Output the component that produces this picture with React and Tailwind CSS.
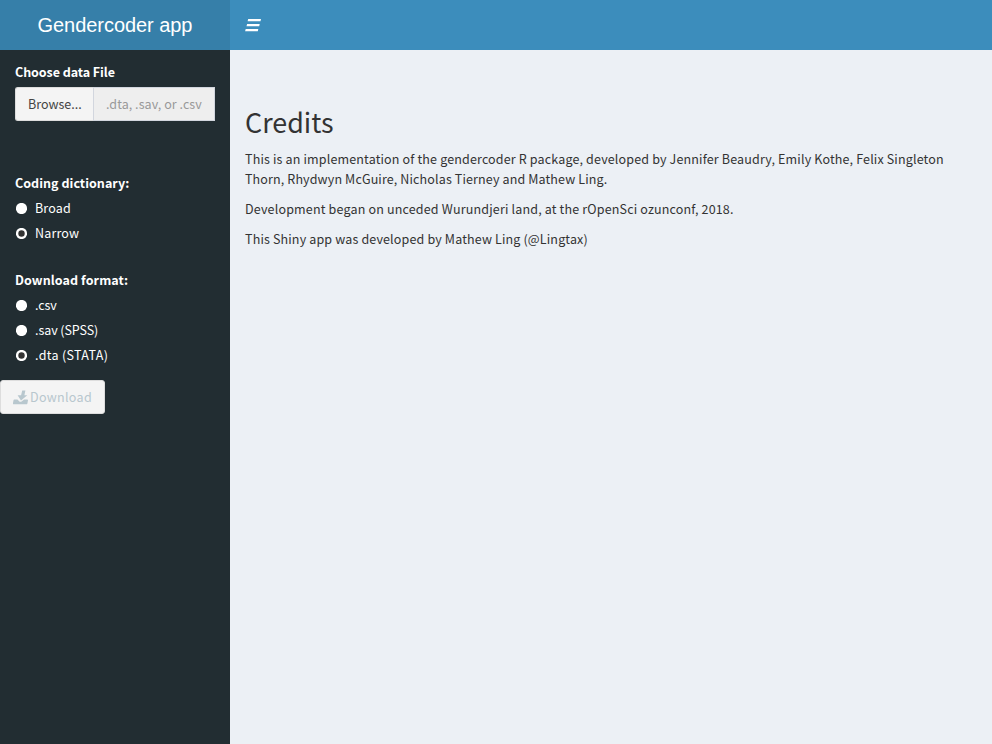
import React from "react";

function Radio({ label, checked, spacing = "" }) {
  return (
    <div className="flex h-5 items-center">
      <svg className="ml-px block h-[11px] w-[11px]" viewBox="0 0 11 11">
        <circle cx="5.5" cy="5.5" r="5.6" fill="#fff" />
        {checked && <circle cx="5.5" cy="5.5" r="3.2" fill="#333" />}
      </svg>
      <span className={`ml-2 whitespace-nowrap ${spacing}`}>{label}</span>
    </div>
  );
}

function BarsIcon() {
  return (
    <svg className="block h-4 w-4" viewBox="0 0 16 16" fill="#fff">
      <path d="M3.2 2H16l-.5 2.2H2.6zM2.1 7h12.6l-.5 2.2H1.5zM.7 12h12.6l-.5 2.2H.1z" />
    </svg>
  );
}

function DownloadIcon() {
  return (
    <svg className="block h-[15px] w-4 shrink-0" viewBox="0 0 16 15" fill="#b8c7ce">
      <path d="M9.2 .5h3.2L11.4 5.3h2.9L8 10.4 4.6 5.3h3.5z" />
      <path d="M1.4 9.4h3.1l1.6 1.8c.7.8 1.9.8 2.8 0l2.2-1.8h3.1c.6 0 .9.4.8.9l-.6 3.1c-.1.5-.6.9-1.1.9H.7c-.6 0-.9-.4-.8-.9l.6-3.1c.1-.5.4-.9.9-.9z" />
    </svg>
  );
}

export default function App() {
  return (
    <div className="flex h-[744px] w-[992px] flex-col overflow-hidden bg-[#ecf0f5] font-['Noto_Sans_CJK_SC',sans-serif] text-[12.53px] leading-5 text-[#333]">
      <header className="flex h-[50px] shrink-0 bg-[#3c8dbc]">
        <div className="w-[230px] bg-[#367fa9] text-center font-['Liberation_Sans',Arial,sans-serif] text-[20px] leading-[50px] tracking-[-0.05px] text-white">
          Gendercoder app
        </div>
        <div className="flex items-center pl-[15px]">
          <BarsIcon />
        </div>
      </header>
      <div className="flex min-h-0 flex-1">
        <aside className="w-[230px] shrink-0 bg-[#222d32] pt-3 text-white">
          <div className="px-[15px]">
            <div className="font-bold tracking-[-0.06px]">Choose data File</div>
            <div className="mt-[5px] flex h-[34px]">
              <div className="w-[78px] rounded-l-[3px] border border-r-0 border-[#ddd] bg-[#f4f4f4] pl-3 leading-8 text-[#444]">
                Browse...
              </div>
              <div className="flex-1 whitespace-nowrap border border-[#d2d6de] bg-[#eee] pl-3 leading-8 tracking-[0.05px] text-[#999]">
                .dta, .sav, or .csv
              </div>
            </div>
            <div className="mt-[52px] font-bold tracking-[0.03px]">Coding dictionary:</div>
            <div className="mt-[5px] flex flex-col gap-[5px]">
              <Radio label="Broad" spacing="tracking-[0.15px]" />
              <Radio label="Narrow" checked spacing="tracking-[0.15px]" />
            </div>
            <div className="mt-[27px] font-bold tracking-[0.08px]">Download format:</div>
            <div className="mt-[5px] flex flex-col gap-[5px]">
              <Radio label=".csv" spacing="tracking-[-0.1px]" />
              <Radio label=".sav (SPSS)" spacing="tracking-[-0.08px]" />
              <Radio label=".dta (STATA)" checked spacing="tracking-[0.33px]" />
            </div>
          </div>
          <button className="mt-[15px] flex h-[34px] w-[105px] items-center rounded-[3px] border border-[#ddd] bg-[#f4f4f4] pl-3 text-[#b8c7ce]">
            <DownloadIcon />
            <span className="ml-px tracking-[0.3px]">Download</span>
          </button>
        </aside>
        <main className="flex-1 whitespace-nowrap px-[15px] pt-[55px]">
          <h2 className="text-[26.86px] leading-[33px]">Credits</h2>
          <p className="mt-[11px]">
            <span className="tracking-[0.15px]">
              This is an implementation of the gendercoder R package, developed by Jennifer Beaudry, Emily Kothe, Felix Singleton
            </span>
            <br />
            <span className="tracking-[0.125px]">
              Thorn, Rhydwyn McGuire, Nicholas Tierney and Mathew Ling.
            </span>
          </p>
          <p className="mt-[10px] tracking-[0.165px]">
            Development began on unceded Wurundjeri land, at the rOpenSci ozunconf, 2018.
          </p>
          <p className="mt-[10px] tracking-[0.145px]">This Shiny app was developed by Mathew Ling (@Lingtax)</p>
        </main>
      </div>
    </div>
  );
}
